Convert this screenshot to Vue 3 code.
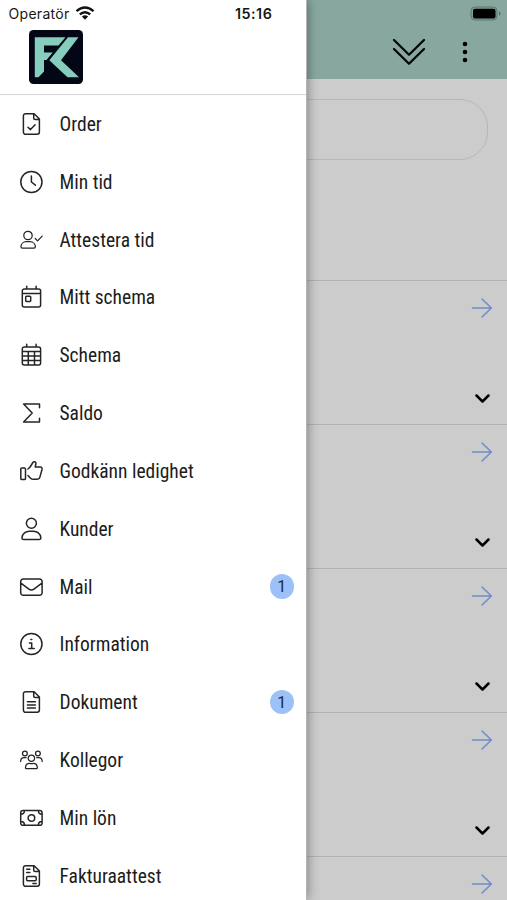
<script setup>
const file = 'M6.7 1.7h8l5.300 5.300v13.100a2.200 2.200 0 0 1-2.200 2.200H6.200A2.200 2.200 0 0 1 4 20.100V3.900a2.200 2.200 0 0 1 2.200-2.200z M14.300 1.700v4.200a1.500 1.500 0 0 0 1.500 1.500h4.200'
const calendar = 'M4.900 4h14.300a2 2 0 0 1 2 2v14a2 2 0 0 1-2 2H4.900a2 2 0 0 1-2-2V6a2 2 0 0 1 2-2z M7.300 1.300V4 M16.700 1.300V4 M3 8.400h18'

const items = [
  { label: 'Order', d: file + ' M8.600 15.200l2.500 2.400 4.600-4.900' },
  { label: 'Min tid', d: 'M12 1.400a10.600 10.600 0 1 0 0 21.200 10.600 10.600 0 0 0 0-21.200z M12 6v6l4 3.200' },
  { label: 'Attestera tid', thin: true, d: 'M8.600 3.300a4.200 4.200 0 1 0 0 8.400 4.200 4.200 0 0 0 0-8.400z M6.800 13.700h3.900a5.300 5.300 0 0 1 5.300 4.900c0 1-.5 1.600-1.500 1.600H3c-1 0-1.500-.6-1.500-1.600a5.300 5.300 0 0 1 5.300-4.900z M15.800 10.500l2.400 2.400 4.600-4.800' },
  { label: 'Mitt schema', d: calendar + ' M7.100 11.300h3.400a.8.8 0 0 1 .8.8v3.500a.8.8 0 0 1-.8.8H7.100a.8.8 0 0 1-.8-.8v-3.500a.8.8 0 0 1 .8-.8z' },
  { label: 'Schema', d: calendar + ' M3 12.900h18 M3 17.400h18 M8.900 8.400V22 M15.100 8.400V22' },
  { label: 'Saldo', d: 'M20.100 6.700V3H4.200l8.600 9-8.600 9h15.900v-3.800' },
  { label: 'Godkänn ledighet', d: 'M2.500 9h2.500a1.100 1.100 0 0 1 1.100 1.100v9.300a1.100 1.100 0 0 1-1.100 1.100H2.500a1.100 1.100 0 0 1-1.100-1.100v-9.300A1.100 1.100 0 0 1 2.500 9z M8.600 16.500l2.300 2.400c1 1 1.800 1.400 3.200 1.400h3.200c1.800 0 2.800-.7 3.200-2.200l2.100-7.600c.3-1.500-.3-2.500-1.800-2.500h-5l.7-3.500c.3-1.800-2-2.500-3-1L11 7.500c-.5.8-1.400 1.700-2.500 2.500' },
  { label: 'Kunder', d: 'M12 1.300a5 5 0 1 0 0 10 5 5 0 0 0 0-10z M10 14.200h4a7.300 7.300 0 0 1 7.400 6.300c.1 1.300-.5 2-1.700 2H4.300c-1.200 0-1.800-.7-1.700-2A7.300 7.300 0 0 1 10 14.200z' },
  { label: 'Mail', badge: 1, d: 'M3.800 4h16.400a2.500 2.500 0 0 1 2.500 2.500v11.200a2.500 2.500 0 0 1-2.500 2.500H3.800a2.500 2.500 0 0 1-2.500-2.500V6.500A2.500 2.500 0 0 1 3.800 4z M1.500 8.200l8 5.900c1.800 1.400 3.200 1.400 5 0l8-5.900' },
  { label: 'Information', d: 'M12 1.400a10.600 10.600 0 1 0 0 21.200 10.600 10.600 0 0 0 0-21.200z M10 10.900h2.300v5.600 M9.500 16.500h5.300 M11.500 7.500h.9' },
  { label: 'Dokument', badge: 1, d: file + ' M8 11.800h8 M8 15h8 M8 18.100h8' },
  { label: 'Kollegor', thin: true, d: 'M12 7a3.200 3.200 0 1 0 0 6.400A3.200 3.200 0 0 0 12 7z M10.500 15.500h3a4.300 4.300 0 0 1 4.400 3.900c.1.900-.3 1.300-1.200 1.300H7.300c-.9 0-1.300-.4-1.200-1.300a4.300 4.300 0 0 1 4.400-3.900z M5.500 3a2.400 2.400 0 1 0 0 4.800 2.400 2.400 0 0 0 0-4.800z M18.500 3a2.400 2.400 0 1 0 0 4.800 2.400 2.400 0 0 0 0-4.800z M1.200 13.500c.1-2.400 1.300-3.800 3.500-3.800h2 M22.800 13.500c-.1-2.400-1.300-3.800-3.500-3.800h-2' },
  { label: 'Min lön', d: 'M3.500 4.500h17a2.200 2.200 0 0 1 2.200 2.200v10.400a2.200 2.200 0 0 1-2.200 2.200h-17a2.200 2.200 0 0 1-2.200-2.200V6.700a2.200 2.200 0 0 1 2.200-2.200z M12 8.700a3.300 3.300 0 1 0 0 6.600 3.300 3.300 0 0 0 0-6.600z M1.500 8.200C3.700 8.200 5 6.900 5 4.800 M22.500 8.200C20.300 8.200 19 6.900 19 4.800 M1.500 15.600c2.200 0 3.500 1.300 3.500 3.400 M22.500 15.600c-2.200 0-3.500 1.300-3.500 3.400' },
  { label: 'Fakturaattest', d: file + ' M8.200 12.500h7.600a1 1 0 0 1 1 1v2.200a1 1 0 0 1-1 1H8.200a1 1 0 0 1-1-1v-2.200a1 1 0 0 1 1-1z M7.300 5.200h3.200 M7.300 8.400h3.200 M13.500 19.500h3.300' },
]
</script>

<template>
  <div class="screen">
    <div class="page">
      <header class="topbar">
        <svg class="battery" viewBox="0 0 31 16">
          <rect x="1" y="1" width="26" height="13" rx="4" fill="#7d9c92" stroke="#5d796f" />
          <rect x="3" y="2.800" width="22.500" height="9.600" rx="2" fill="#000" />
          <path d="M29 5.300c2 .8 2 3.700 0 4.500z" fill="#567067" />
        </svg>
        <div class="actions">
          <svg class="double" viewBox="0 0 34 28"><path d="M2 2l15 14.800L32 2M2 11l15 14.800L32 11" /></svg>
          <svg class="dots" viewBox="0 0 6 22"><circle cx="3" cy="3" r="2.300" /><circle cx="3" cy="11" r="2.300" /><circle cx="3" cy="19" r="2.300" /></svg>
        </div>
      </header>
      <div class="filter"><div class="search"></div></div>
      <section v-for="n in 5" :key="n" class="card">
        <svg class="arrow" viewBox="0 0 22 22"><path d="M1.500 11h18.500M11 2l9.300 9-9.300 9" /></svg>
        <svg class="chevron" viewBox="0 0 16 11"><path d="M1.500 1.500l6 6 6-6" /></svg>
      </section>
    </div>

    <aside class="drawer">
      <div class="brand">
        <div class="status">
          <span class="carrier">Operatör</span>
          <svg class="wifi" viewBox="0 0 20 14">
            <path d="M1.500 5.200Q10-2 18.500 5.200M4.800 8.400Q10 4 15.200 8.400" />
            <path class="solid" d="M6.900 10.600Q10 8 13.100 10.600L10 13.700z" />
          </svg>
          <span class="clock">15:16</span>
        </div>
        <svg class="logo" viewBox="0 0 54 54">
          <rect width="54" height="54" rx="4.500" fill="#020615" />
          <path d="M5.800 7.300H36.500L29.500 15.500H15v7h8.700L17.500 30H15v11.500L9.500 47.300H5.800z" fill="#86cdbd" />
          <path d="M39 7.300h10.500L32 30.300l18 17H38.500L20.300 30.300z" fill="#86cdbd" />
        </svg>
      </div>
      <nav class="menu">
        <a v-for="item in items" :key="item.label" class="row">
          <svg class="icon" :class="{ thin: item.thin }" viewBox="-0.4 0 24 24"><path :d="item.d" /></svg>
          <span class="label">{{ item.label }}</span>
          <span v-if="item.badge" class="badge">{{ item.badge }}</span>
        </a>
      </nav>
    </aside>
  </div>
</template>

<style>
body { overflow: hidden; }
</style>

<style scoped>
.screen { position: relative; width: 507px; height: 900px; overflow: hidden; background: #ccc; }
.page { display: flex; flex-direction: column; }
.topbar { display: flex; flex-direction: column; align-items: flex-end; height: 79px; box-sizing: border-box; padding: 6px 7px 0 0; background: #88a89f; }
.battery { width: 31px; height: 16px; margin-right: -1px; }
.actions { display: flex; align-items: center; gap: 36px; margin: 16px 32px 0 0; }
.double { width: 34px; height: 28px; fill: none; stroke: #050505; stroke-width: 2.3; stroke-linecap: round; stroke-linejoin: round; }
.dots { width: 6px; height: 22px; }
.filter { height: 201px; box-sizing: border-box; padding: 20px 19.5px 0; }
.search { height: 60.5px; box-sizing: border-box; border: 1px solid #b7b7b7; border-radius: 28px; }
.card { display: flex; flex: none; flex-direction: column; align-items: flex-end; justify-content: space-between; height: 144.05px; box-sizing: border-box; padding: 16px 14px 19.5px 0; border-top: 1.5px solid #b1b1b1; }
.arrow { width: 22px; height: 22px; fill: none; stroke: #6c8fcc; stroke-width: 1.6; stroke-linecap: round; stroke-linejoin: round; overflow: visible; }
.chevron { width: 16px; height: 11px; margin-right: 2px; fill: none; stroke: #000; stroke-width: 2.5; stroke-linecap: round; stroke-linejoin: round; }
.drawer { position: absolute; top: 0; left: 0; width: 306px; height: 100%; border-right: 1px solid #b5b5b5; box-sizing: content-box; background: #fff; background-clip: padding-box; box-shadow: 0 0 11px rgba(0, 0, 0, .42); }
.brand { height: 95px; box-sizing: border-box; border-bottom: 1.5px solid #d7d7d7; }
.status { display: flex; align-items: center; height: 27px; padding-left: 8.5px; font-family: Inter, sans-serif; color: #161616; }
.carrier { width: 62.5px; font-size: 14px; letter-spacing: .3px; }
.wifi { width: 20px; height: 14px; margin: -2px 0 0 4px; fill: none; stroke: #111; stroke-width: 2.4; }
.solid { fill: #111; stroke: none; }
.clock { margin-left: 140px; font-size: 14.3px; font-weight: 600; letter-spacing: .5px; }
.logo { display: block; width: 54px; height: 54px; margin: 3px 0 0 29px; }
.menu { display: flex; flex-direction: column; }
.row { display: flex; flex: none; align-items: center; height: 57.83px; padding: 0 12px 0 19px; }
.icon { width: 24px; height: 24px; flex: none; fill: none; stroke: #252525; stroke-width: 1.5; stroke-linecap: round; stroke-linejoin: round; overflow: visible; }
.thin { stroke-width: 1.25; }
.label { margin: 2px 0 0 16.5px; font-family: "Roboto Condensed", Roboto, sans-serif; font-stretch: 75%; font-size: 19.5px; line-height: 24px; color: #1c1c1c; white-space: nowrap; }
.badge { display: flex; align-items: center; justify-content: center; width: 24.5px; height: 24.5px; margin-left: auto; border-radius: 50%; background: #9bc1f8; font-family: Roboto, sans-serif; font-size: 16px; color: #1d2c45; }
</style>
